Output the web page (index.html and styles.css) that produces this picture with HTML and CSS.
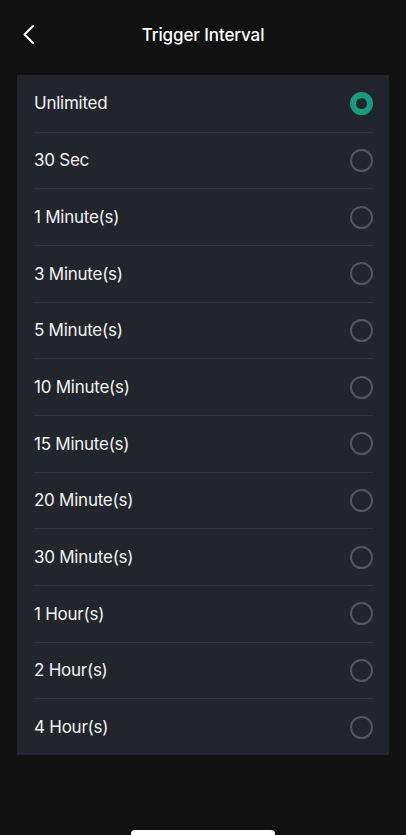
FILE: index.html
```html
<!DOCTYPE html>
<html>
<head>
<meta charset="utf-8">
<link rel="stylesheet" href="styles.css">
</head>
<body>
<div class="screen">
  <header class="topbar">
    <button class="back" aria-label="Back">
      <svg width="20" height="22" viewBox="0 0 20 22"><path d="M10 2 L1.5 10.5 L10 19" fill="none" stroke="#ffffff" stroke-width="2" stroke-linecap="round" stroke-linejoin="round"/></svg>
    </button>
    <h1 class="title">Trigger Interval</h1>
  </header>
  <ul class="card">
    <li class="row"><span class="label">Unlimited</span><span class="radio on"></span></li>
    <li class="row"><span class="label">30 Sec</span><span class="radio"></span></li>
    <li class="row"><span class="label">1 Minute(s)</span><span class="radio"></span></li>
    <li class="row"><span class="label">3 Minute(s)</span><span class="radio"></span></li>
    <li class="row"><span class="label">5 Minute(s)</span><span class="radio"></span></li>
    <li class="row"><span class="label">10 Minute(s)</span><span class="radio"></span></li>
    <li class="row"><span class="label">15 Minute(s)</span><span class="radio"></span></li>
    <li class="row"><span class="label">20 Minute(s)</span><span class="radio"></span></li>
    <li class="row"><span class="label">30 Minute(s)</span><span class="radio"></span></li>
    <li class="row"><span class="label">1 Hour(s)</span><span class="radio"></span></li>
    <li class="row"><span class="label">2 Hour(s)</span><span class="radio"></span></li>
    <li class="row"><span class="label">4 Hour(s)</span><span class="radio"></span></li>
  </ul>
  <div class="home-indicator"></div>
</div>
</body>
</html>
```
FILE: styles.css
```css
html, body {
  margin: 0;
  padding: 0;
  background: #111111;
}
.screen {
  width: 406px;
  height: 835px;
  position: relative;
  overflow: hidden;
  font-family: Inter, "Noto Sans", sans-serif;
  color: #f2f2f2;
  box-sizing: border-box;
}
.topbar {
  height: 70px;
  display: flex;
  align-items: center;
  justify-content: center;
  position: relative;
}
.back {
  position: absolute;
  left: 23px;
  top: 24px;
  background: none;
  border: none;
  padding: 0;
  width: 20px;
  height: 22px;
  display: flex;
}
.title {
  margin: 0;
  font-size: 17px;
  font-weight: 500;
  color: #ffffff;
  letter-spacing: -0.1px;
}
.card {
  list-style: none;
  margin: 5px 17px 0 17px;
  padding: 0 16px 0 17px;
  background: #22252c;
}
.row {
  height: 56.67px;
  box-sizing: border-box;
  display: flex;
  align-items: center;
  justify-content: space-between;
  border-top: 1px solid #30333a;
}
.row:first-child {
  border-top: none;
}
.label {
  font-size: 17px;
  font-weight: 400;
  letter-spacing: -0.25px;
  color: #f2f2f2;
}
.radio {
  width: 23px;
  height: 23px;
  box-sizing: border-box;
  border-radius: 50%;
  border: 2px solid #55575c;
}
.radio.on {
  border: 6.5px solid #1a9a80;
  background: #22252c;
}
.home-indicator {
  position: absolute;
  left: 131px;
  bottom: -3px;
  width: 144px;
  height: 8px;
  border-radius: 4px;
  background: #ffffff;
}
```
